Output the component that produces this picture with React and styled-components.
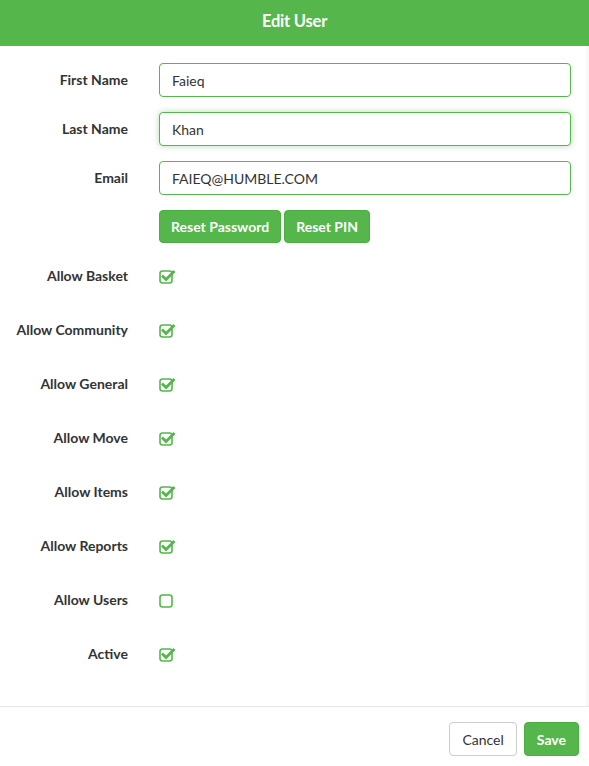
import styled, { createGlobalStyle } from 'styled-components'

const GREEN = '#54b64b'

const GlobalStyle = createGlobalStyle`
    html, body {
        margin: 0;
        padding: 0;
        background: #fff;
    }
    body {
        font-family: Lato, "Open Sans", sans-serif;
        color: #333;
    }
`

const textFields = [
    { label: 'First Name', value: 'Faieq' },
    { label: 'Last Name', value: 'Khan', focused: true },
    { label: 'Email', value: 'FAIEQ@HUMBLE.COM' },
]

const permissions = [
    { label: 'Allow Basket', checked: true },
    { label: 'Allow Community', checked: true },
    { label: 'Allow General', checked: true },
    { label: 'Allow Move', checked: true },
    { label: 'Allow Items', checked: true },
    { label: 'Allow Reports', checked: true },
    { label: 'Allow Users', checked: false },
    { label: 'Active', checked: true },
]

const CheckIcon = ({ checked }) => (
    <svg width="18" height="16" viewBox="0 0 18 16">
        <rect x="1" y="3" width="12" height="12" rx="2.5" fill="none" stroke={GREEN} strokeWidth="1.6" />
        {checked && (
            <path d="M4 8.5 L7 11.5 L14.5 4" fill="none" stroke={GREEN} strokeWidth="2.8" strokeLinecap="square" />
        )}
    </svg>
)

const App = () => {
    return (
        <Modal>
            <GlobalStyle />
            <Header>Edit User</Header>

            <Body>
                {textFields.map((f) => (
                    <Row key={f.label}>
                        <Label>{f.label}</Label>
                        <Input defaultValue={f.value} $focused={f.focused} />
                    </Row>
                ))}

                <Row>
                    <span />
                    <ButtonGroup>
                        <GreenButton>Reset Password</GreenButton>
                        <GreenButton>Reset PIN</GreenButton>
                    </ButtonGroup>
                </Row>

                {permissions.map((p) => (
                    <CheckRow key={p.label}>
                        <CheckLabel>{p.label}</CheckLabel>
                        <CheckCell>
                            <CheckIcon checked={p.checked} />
                        </CheckCell>
                    </CheckRow>
                ))}
            </Body>

            <Footer>
                <CancelButton>Cancel</CancelButton>
                <GreenButton $tall>Save</GreenButton>
            </Footer>
        </Modal>
    )
}

const Modal = styled.div`
    width: 589px;
    min-height: 766px;
    display: flex;
    flex-direction: column;
    background: #fff;
`

const Header = styled.div`
    height: 46px;
    box-sizing: border-box;
    padding-bottom: 5px;
    display: flex;
    align-items: center;
    justify-content: center;
    background: ${GREEN};
    color: #fff;
    font-size: 16.5px;
    font-weight: 700;
    letter-spacing: -0.2px;
`

const Body = styled.div`
    padding: 17px 18px 16px 0;
    box-shadow: inset -3px 0 0 #f8f8f8;
`

const Row = styled.div`
    display: grid;
    grid-template-columns: 128px 1fr;
    column-gap: 31px;
    margin-bottom: 15px;
`

const Label = styled.label`
    padding-top: 7px;
    line-height: 20px;
    font-size: 14px;
    font-weight: 700;
    text-align: right;
    color: #333;
`

const Input = styled.input`
    box-sizing: border-box;
    width: 100%;
    height: 34px;
    padding: 6px 12px;
    border: 1px solid ${GREEN};
    border-radius: 4px;
    font-family: Lato, sans-serif;
    font-size: 14px;
    color: #333;
    outline: none;
    box-shadow: ${(p) => (p.$focused ? '0 0 6px rgba(84, 182, 75, 0.45)' : 'none')};
`

const ButtonGroup = styled.div`
    display: flex;
    gap: 3px;
`

const GreenButton = styled.button`
    height: ${(p) => (p.$tall ? '34px' : '33px')};
    padding: 0 ${(p) => (p.$tall ? '12px' : '11px')};
    border: 1px solid #4cad43;
    border-radius: 4px;
    background: ${GREEN};
    color: #fff;
    font-family: Lato, sans-serif;
    font-size: 14px;
    font-weight: 700;
    cursor: pointer;
`

const CheckRow = styled.div`
    display: grid;
    grid-template-columns: 128px 1fr;
    column-gap: 31px;
    min-height: 39px;
    margin-bottom: 15px;
`

const CheckLabel = styled(Label)`
    padding-top: 8px;
`

const CheckCell = styled.div`
    padding-top: 10px;
    height: 16px;
    line-height: 0;
`

const Footer = styled.div`
    display: flex;
    justify-content: flex-end;
    gap: 7px;
    padding: 15px 10px 10px;
    border-top: 1px solid #e5e5e5;
`

const CancelButton = styled.button`
    height: 34px;
    padding: 0 12px;
    border: 1px solid #ccc;
    border-radius: 4px;
    background: #fff;
    color: #333;
    font-family: Lato, sans-serif;
    font-size: 14px;
    cursor: pointer;
`

export default App
